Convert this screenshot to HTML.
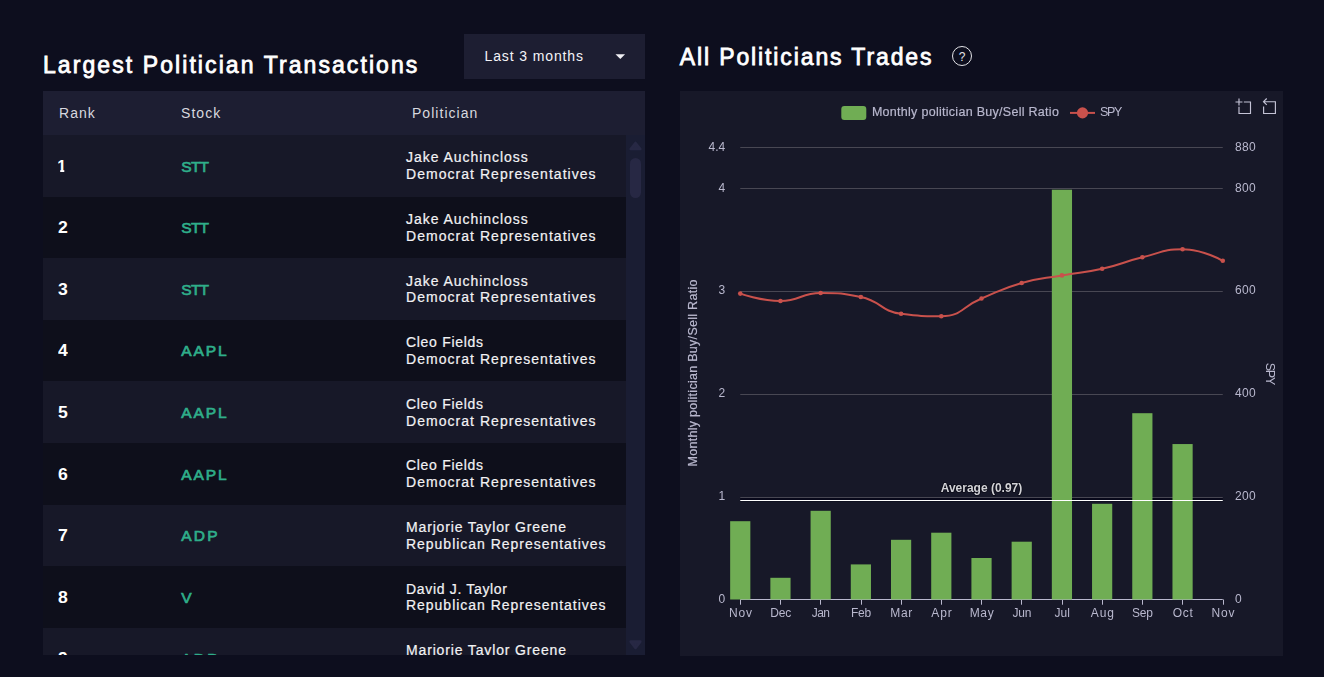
<!DOCTYPE html><html><head><meta charset='utf-8'><title>Politician Trades</title><style>
*{box-sizing:border-box}
html,body{margin:0;padding:0}
body{width:1324px;height:677px;overflow:hidden;position:relative;background:#0d0e1e;font-family:'Liberation Sans', sans-serif;color:#fff}
.abs{position:absolute;white-space:nowrap}
.title{font-size:23px;font-weight:400;color:#fff;line-height:28px;-webkit-text-stroke:0.8px #fff}
.dd{left:464px;top:34px;width:181px;height:45px;background:#1d1e32}
.hdr{left:43px;top:91px;width:602px;height:44px;background:#1d1e32}
.hdr span{position:absolute;top:0;line-height:44px;font-size:14px;color:#d8d8df}
.rows{left:43px;top:135px;width:583px;height:520px;overflow:hidden}
.row{position:absolute;left:0;width:583px;height:61.6px}
.rank{position:absolute;left:15px;top:22.7px;line-height:18px;height:18px;font-size:16px;font-weight:700;color:#fff;transform:scaleX(1.1);transform-origin:0 0}
.rank.one{left:14.3px;transform:none;clip-path:polygon(0 0,100% 0,100% 12.2px,7px 12.2px,7px 100%,2.9px 100%,2.9px 12.2px,0 12.2px)}
.tick{position:absolute;left:138.3px;top:22.7px;line-height:18px;height:18px;font-size:15.5px;font-weight:400;color:#2fae8a;-webkit-text-stroke:0.7px #2fae8a}
.nm{position:absolute;left:363px;font-size:14px;line-height:16.8px;height:16.8px;color:#f2f2f4;-webkit-text-stroke:0.2px #f2f2f4}
.track{left:626px;top:135px;width:19px;height:520px;background:#1a1d33}
.thumb{left:630px;top:157.7px;width:11px;height:40px;border-radius:5.5px;background:#272844}
.chart{left:680px;top:91px;width:603px;height:565px;background:#171828}
svg text{font-family:'Liberation Sans', sans-serif;font-size:12px;fill:#B9B8CE}
</style></head><body><div class='abs title' style='left:43px;top:51px;letter-spacing:2.079px'>Largest Politician Transactions</div><div class='abs dd'><span class='abs' style='left:20.5px;top:0;line-height:44px;font-size:14px;color:#f4f4f8;letter-spacing:0.88px'>Last 3 months</span><svg class='abs' style='left:151px;top:19.5px' width='11' height='6' viewBox='0 0 11 6'><path d='M0.5 0.3 L10.1 0.3 L5.3 5.1 Z' fill='#f0f0f4'/></svg></div><div class='abs hdr'><span style='left:16px;letter-spacing:1.037px'>Rank</span><span style='left:138px;letter-spacing:1.071px'>Stock</span><span style='left:369px;letter-spacing:1.03px'>Politician</span></div><div class='abs rows'><div class='row' style='top:0.0px;background:#171828'><span class='rank one'>1</span><span class='tick' style='letter-spacing:-0.741px'>STT</span><span class='nm' style='top:14.4px;letter-spacing:0.953px'>Jake Auchincloss</span><span class='nm' style='top:31.2px;letter-spacing:1.037px'>Democrat Representatives</span></div><div class='row' style='top:61.6px;background:#0e0f1b'><span class='rank'>2</span><span class='tick' style='letter-spacing:-0.741px'>STT</span><span class='nm' style='top:14.4px;letter-spacing:0.953px'>Jake Auchincloss</span><span class='nm' style='top:31.2px;letter-spacing:1.037px'>Democrat Representatives</span></div><div class='row' style='top:123.2px;background:#171828'><span class='rank'>3</span><span class='tick' style='letter-spacing:-0.741px'>STT</span><span class='nm' style='top:14.4px;letter-spacing:0.953px'>Jake Auchincloss</span><span class='nm' style='top:31.2px;letter-spacing:1.037px'>Democrat Representatives</span></div><div class='row' style='top:184.8px;background:#0e0f1b'><span class='rank'>4</span><span class='tick' style='letter-spacing:1.92px'>AAPL</span><span class='nm' style='top:14.4px;letter-spacing:0.697px'>Cleo Fields</span><span class='nm' style='top:31.2px;letter-spacing:1.037px'>Democrat Representatives</span></div><div class='row' style='top:246.4px;background:#171828'><span class='rank'>5</span><span class='tick' style='letter-spacing:1.92px'>AAPL</span><span class='nm' style='top:14.4px;letter-spacing:0.697px'>Cleo Fields</span><span class='nm' style='top:31.2px;letter-spacing:1.037px'>Democrat Representatives</span></div><div class='row' style='top:308.0px;background:#0e0f1b'><span class='rank'>6</span><span class='tick' style='letter-spacing:1.92px'>AAPL</span><span class='nm' style='top:14.4px;letter-spacing:0.697px'>Cleo Fields</span><span class='nm' style='top:31.2px;letter-spacing:1.037px'>Democrat Representatives</span></div><div class='row' style='top:369.6px;background:#171828'><span class='rank'>7</span><span class='tick' style='letter-spacing:2.162px'>ADP</span><span class='nm' style='top:14.4px;letter-spacing:0.85px'>Marjorie Taylor Greene</span><span class='nm' style='top:31.2px;letter-spacing:0.976px'>Republican Representatives</span></div><div class='row' style='top:431.2px;background:#0e0f1b'><span class='rank'>8</span><span class='tick' style='letter-spacing:0px'>V</span><span class='nm' style='top:14.4px;letter-spacing:0.674px'>David J. Taylor</span><span class='nm' style='top:31.2px;letter-spacing:0.976px'>Republican Representatives</span></div><div class='row' style='top:492.8px;background:#171828'><span class='rank'>9</span><span class='tick' style='letter-spacing:2.162px'>ADP</span><span class='nm' style='top:14.4px;letter-spacing:0.85px'>Marjorie Taylor Greene</span><span class='nm' style='top:31.2px;letter-spacing:0.976px'>Republican Representatives</span></div></div><div class='abs track'></div><div class='abs thumb'></div><svg class='abs' style='left:626px;top:135px' width='19' height='520' viewBox='0 0 19 520'><path d='M9.5 8 L14.3 14 L4.7 14 Z' fill='#272844' stroke='#272844' stroke-width='2.6' stroke-linejoin='round'/><path d='M4.7 506.6 L14.3 506.6 L9.5 513 Z' fill='#272844' stroke='#272844' stroke-width='2.6' stroke-linejoin='round'/></svg><div class='abs title' style='left:679.7px;top:42.5px;letter-spacing:1.886px'>All Politicians Trades</div><div class='abs' style='left:952px;top:46px;width:20px;height:20px;border:1.4px solid #e4e4e8;border-radius:50%;font-size:12px;line-height:17px;padding-top:2px;text-align:center;color:#e4e4e8'>?</div><div class='abs chart'><svg width='603' height='565' viewBox='0 0 603 565' style='position:absolute;left:0;top:0;will-change:transform'><rect x='60.25' y='56' width='482.52' height='1' fill='#484753'/><rect x='60.25' y='97' width='482.52' height='1' fill='#484753'/><rect x='60.25' y='200' width='482.52' height='1' fill='#484753'/><rect x='60.25' y='303' width='482.52' height='1' fill='#484753'/><rect x='60.25' y='406' width='482.52' height='1' fill='#484753'/><text x='45.3' y='512' text-anchor='end'>0</text><text x='555' y='512' style='letter-spacing:0.3px'>0</text><text x='45.3' y='409' text-anchor='end'>1</text><text x='555' y='409' style='letter-spacing:0.3px'>200</text><text x='45.3' y='306' text-anchor='end'>2</text><text x='555' y='306' style='letter-spacing:0.3px'>400</text><text x='45.3' y='203' text-anchor='end'>3</text><text x='555' y='203' style='letter-spacing:0.3px'>600</text><text x='45.3' y='101' text-anchor='end'>4</text><text x='555' y='101' style='letter-spacing:0.3px'>800</text><text x='45.3' y='60' text-anchor='end'>4.4</text><text x='555' y='60' style='letter-spacing:0.3px'>880</text><rect x='60.25' y='508' width='482.52' height='1' fill='#B9B8CE'/><rect x='60.0' y='508.5' width='1' height='5.2' fill='#B9B8CE'/><text x='60.88' y='526.1' text-anchor='middle' style='letter-spacing:0.85px'>Nov</text><rect x='100.0' y='508.5' width='1' height='5.2' fill='#B9B8CE'/><text x='100.59' y='526.1' text-anchor='middle' style='letter-spacing:-0.15px'>Dec</text><rect x='140.0' y='508.5' width='1' height='5.2' fill='#B9B8CE'/><text x='140.57' y='526.1' text-anchor='middle' style='letter-spacing:-0.6px'>Jan</text><rect x='181.0' y='508.5' width='1' height='5.2' fill='#B9B8CE'/><text x='181.0' y='526.1' text-anchor='middle' style='letter-spacing:-0.15px'>Feb</text><rect x='221.0' y='508.5' width='1' height='5.2' fill='#B9B8CE'/><text x='221.67' y='526.1' text-anchor='middle' style='letter-spacing:0.75px'>Mar</text><rect x='261.0' y='508.5' width='1' height='5.2' fill='#B9B8CE'/><text x='262.0' y='526.1' text-anchor='middle' style='letter-spacing:1.0px'>Apr</text><rect x='301.0' y='508.5' width='1' height='5.2' fill='#B9B8CE'/><text x='302.04' y='526.1' text-anchor='middle' style='letter-spacing:0.65px'>May</text><rect x='341.0' y='508.5' width='1' height='5.2' fill='#B9B8CE'/><text x='341.82' y='526.1' text-anchor='middle' style='letter-spacing:-0.2px'>Jun</text><rect x='382.0' y='508.5' width='1' height='5.2' fill='#B9B8CE'/><text x='382.16' y='526.1' text-anchor='middle' style='letter-spacing:0.05px'>Jul</text><rect x='422.0' y='508.5' width='1' height='5.2' fill='#B9B8CE'/><text x='422.76' y='526.1' text-anchor='middle' style='letter-spacing:0.85px'>Aug</text><rect x='462.0' y='508.5' width='1' height='5.2' fill='#B9B8CE'/><text x='462.42' y='526.1' text-anchor='middle' style='letter-spacing:-0.25px'>Sep</text><rect x='502.0' y='508.5' width='1' height='5.2' fill='#B9B8CE'/><text x='503.13' y='526.1' text-anchor='middle' style='letter-spacing:0.75px'>Oct</text><rect x='543.0' y='508.5' width='1' height='5.2' fill='#B9B8CE'/><text x='543.42' y='526.1' text-anchor='middle' style='letter-spacing:0.9px'>Nov</text><rect x='60.25' y='407' width='482.52' height='3' fill='#08081a'/><rect x='60.25' y='410' width='482.52' height='1' fill='#0f1020'/><rect x='50.15' y='430.2' width='20.2' height='78.3' fill='#70ad54'/><rect x='90.36' y='486.8' width='20.2' height='21.7' fill='#70ad54'/><rect x='130.57' y='419.8' width='20.2' height='88.7' fill='#70ad54'/><rect x='170.78' y='473.4' width='20.2' height='35.1' fill='#70ad54'/><rect x='210.99' y='448.8' width='20.2' height='59.7' fill='#70ad54'/><rect x='251.2' y='441.7' width='20.2' height='66.8' fill='#70ad54'/><rect x='291.41' y='467.0' width='20.2' height='41.5' fill='#70ad54'/><rect x='331.62' y='450.7' width='20.2' height='57.8' fill='#70ad54'/><rect x='371.83' y='98.7' width='20.2' height='409.8' fill='#70ad54'/><rect x='412.04' y='412.8' width='20.2' height='95.7' fill='#70ad54'/><rect x='452.25' y='322.2' width='20.2' height='186.3' fill='#70ad54'/><rect x='492.46' y='353.05' width='20.2' height='155.45' fill='#70ad54'/><rect x='60.25' y='409' width='482.52' height='1' fill='#fff'/><text x='301.5' y='401' text-anchor='middle' style='fill:#d2d2d6;font-weight:700;letter-spacing:0px;stroke:#0c0c18;stroke-width:1.6px;stroke-linejoin:round;paint-order:stroke fill'>Average (0.97)</text><path d='M60.25 202.6 C60.25 202.6 80.38 210 100.46 210 C120.59 210.0 120.42 202.0 140.67 202 C160.63 202.0 161.53 202 180.88 206 C201.74 210.31 200.19 220.2 221.09 222.8 C240.4 225.2 242.07 225.2 261.3 225.2 C282.28 225.2 281.21 215.88 301.51 207.5 C321.42 199.28 321.1 197.92 341.72 192 C361.31 186.37 361.78 187.96 381.93 184.4 C401.99 180.86 402.3 182.27 422.14 177.8 C442.51 173.22 442.05 171.25 462.35 166.3 C482.26 161.45 482.66 158.2 502.56 158.2 C522.87 158.2 542.77 169.8 542.77 169.8' fill='none' stroke='#c9514c' stroke-width='2' stroke-linejoin='round'/><circle cx='60.25' cy='202.6' r='2.3' fill='#c9514c'/><circle cx='100.46' cy='210' r='2.3' fill='#c9514c'/><circle cx='140.67' cy='202' r='2.3' fill='#c9514c'/><circle cx='180.88' cy='206' r='2.3' fill='#c9514c'/><circle cx='221.09' cy='222.8' r='2.3' fill='#c9514c'/><circle cx='261.3' cy='225.2' r='2.3' fill='#c9514c'/><circle cx='301.51' cy='207.5' r='2.3' fill='#c9514c'/><circle cx='341.72' cy='192' r='2.3' fill='#c9514c'/><circle cx='381.93' cy='184.4' r='2.3' fill='#c9514c'/><circle cx='422.14' cy='177.8' r='2.3' fill='#c9514c'/><circle cx='462.35' cy='166.3' r='2.3' fill='#c9514c'/><circle cx='502.56' cy='158.2' r='2.3' fill='#c9514c'/><circle cx='542.77' cy='169.8' r='2.3' fill='#c9514c'/><rect x='161.3' y='14.9' width='25' height='14' rx='3' fill='#70ad54'/><text x='191.9' y='25.3' style='font-size:12.5px;letter-spacing:0.285px;stroke:#B9B8CE;stroke-width:0.2px'>Monthly politician Buy/Sell Ratio</text><line x1='390' x2='415' y1='21.9' y2='21.9' stroke='#c9514c' stroke-width='2'/><circle cx='402.5' cy='21.9' r='5.6' fill='#c9514c'/><text x='420' y='25.3' style='font-size:12.5px;letter-spacing:-1.3px'>SPY</text><text transform='translate(16.5 281.9) rotate(-90)' text-anchor='middle' style='font-size:12.5px;letter-spacing:0.285px;stroke:#B9B8CE;stroke-width:0.2px'>Monthly politician Buy/Sell Ratio</text><text transform='translate(586 282.4) rotate(90)' text-anchor='middle' style='font-size:12.5px;letter-spacing:-1.3px'>SPY</text><g transform='translate(555.5 7.5) scale(0.25862068965517243)' fill='none' stroke='#c4c3d6' stroke-width='4.446666666666666'><path d='M0,13.5h26.9 M13.5,26.9V0 M32.1,13.5H58V58H13.5 V32.1'/></g><g transform='translate(580.88 7.13) scale(0.26455026455026454)' fill='none' stroke='#c4c3d6' stroke-width='4.3469999999999995'><path d='M22,1.4L9.9,13.5l12.3,12.3 M10.3,13.5H54.9v44.6 H10.3v-26'/></g></svg></div></body></html>
